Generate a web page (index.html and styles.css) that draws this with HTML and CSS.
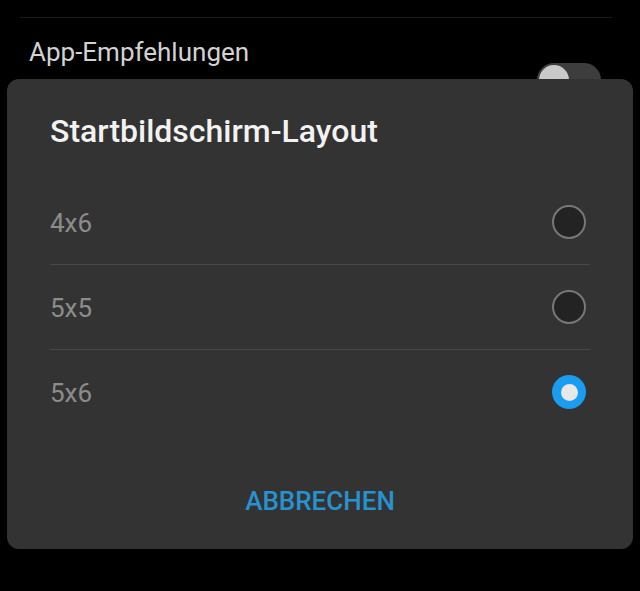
FILE: index.html
```html
<!DOCTYPE html>
<html lang="de">
  <head>
    <meta charset="utf-8">
    <title>Startbildschirm-Layout</title>
    <link rel="stylesheet" href="styles.css">
  </head>
  <body>
    <div class="settings">
      <div class="settings-divider"></div>
      <div class="setting-row">
        <div class="setting-text">
          <div class="setting-title">App-Empfehlungen</div>
          <div class="setting-sub">Apps im Ordner „Empfohlene Apps" anzeigen</div>
        </div>
        <div class="toggle"><span class="toggle-knob"></span></div>
      </div>
    </div>

    <div class="dialog">
      <h2 class="dialog-title">Startbildschirm-Layout</h2>
      <div class="options">
        <div class="option">
          <span class="option-label">4x6</span>
          <span class="radio"></span>
        </div>
        <div class="option">
          <span class="option-label">5x5</span>
          <span class="radio"></span>
        </div>
        <div class="option">
          <span class="option-label">5x6</span>
          <span class="radio checked"></span>
        </div>
      </div>
      <div class="dialog-actions">
        <span class="btn-cancel">ABBRECHEN</span>
      </div>
    </div>
  </body>
</html>
```

FILE: styles.css
```css
html {
  font-family: Roboto, "Noto Sans", sans-serif;
}

body {
  margin: 0;
  width: 640px;
  height: 591px;
  background: #000;
  position: relative;
  overflow: hidden;
}

/* settings list behind the dialog */
.settings {
  padding: 17px 39px 0 29px;
}

.settings-divider {
  height: 1px;
  margin-left: -9px;
  margin-right: -11px;
  background: #1c1c1c;
}

.setting-row {
  display: flex;
  justify-content: space-between;
  padding-top: 17px;
}

.setting-title {
  color: #d2d2d2;
  font-size: 26px;
  line-height: 34px;
}

.setting-sub {
  color: #8a8a8a;
  font-size: 19px;
  line-height: 24px;
  margin-top: 6px;
}

.toggle {
  width: 64px;
  height: 34px;
  margin-top: 28px;
  border-radius: 17px;
  background: #3d3d3d;
  display: flex;
  align-items: center;
  padding-left: 2px;
  box-sizing: border-box;
}

.toggle-knob {
  width: 30px;
  height: 30px;
  border-radius: 50%;
  background: #c9c9c9;
}

/* dialog */
.dialog {
  position: absolute;
  left: 7px;
  top: 79px;
  width: 626px;
  height: 470px;
  box-sizing: border-box;
  padding: 32px 43px 0 43px;
  background: #333333;
  border-radius: 12px;
}

.dialog-title {
  margin: 0 0 28px 0;
  color: #f2f2f2;
  font-size: 32px;
  font-weight: 500;
  line-height: 40px;
}

.option {
  height: 85px;
  box-sizing: border-box;
  display: flex;
  align-items: center;
  justify-content: space-between;
}

.option + .option {
  border-top: 1px solid #474747;
}

.option-label {
  color: #8c8c8c;
  font-size: 26px;
  padding-top: 2px;
}

.radio {
  width: 34px;
  height: 34px;
  box-sizing: border-box;
  border-radius: 50%;
  border: 2px solid #777;
  background: #232323;
  margin-right: 4px;
}

.radio.checked {
  border: none;
  background: #1a9cf0;
  display: flex;
  align-items: center;
  justify-content: center;
}

.radio.checked::after {
  content: "";
  width: 17px;
  height: 17px;
  border-radius: 50%;
  background: #e8e8e8;
}

.dialog-actions {
  display: flex;
  justify-content: center;
  padding-top: 43px;
}

.btn-cancel {
  color: #2692d0;
  font-size: 26px;
  font-weight: 500;
  line-height: 48px;
}
```
